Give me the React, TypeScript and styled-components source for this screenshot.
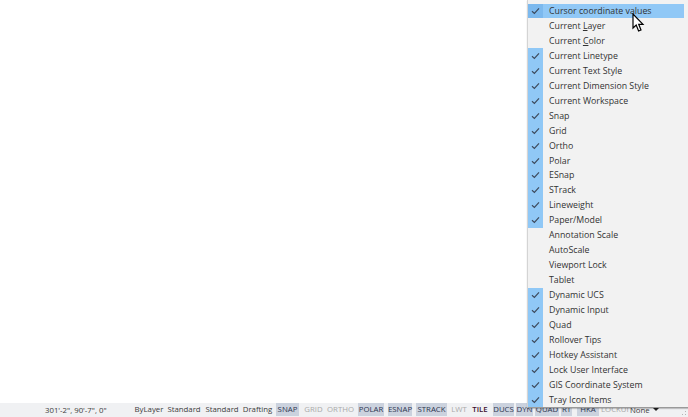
import React from "react";
import styled, { createGlobalStyle } from "styled-components";

const GlobalStyle = createGlobalStyle`
  html, body {
    margin: 0;
    padding: 0;
    background: #fff;
  }
`;

const Page = styled.div`
  position: relative;
  width: 688px;
  height: 417px;
  overflow: hidden;
  display: flex;
  flex-direction: column;
  justify-content: flex-end;
  font-family: "Open Sans", "Noto Sans", sans-serif;
`;

const StatusBar = styled.div`
  height: 14px;
  box-sizing: border-box;
  padding: 0 0 1px 45px;
  background: #f0f1f3;
  display: flex;
  align-items: center;
  font-size: 7.8px;
  color: #3c3c3c;
  white-space: nowrap;
`;

const Coords = styled.div`
  width: 89px;
`;

const Cell = styled.div<{ $on?: boolean; $off?: boolean; $w: number; $gap: number; $strong?: boolean }>`
  width: ${(p) => p.$w}px;
  margin-right: ${(p) => p.$gap}px;
  height: 13px;
  line-height: 13px;
  text-align: center;
  flex-shrink: 0;
  background: ${(p) => (p.$on ? "#cbd2de" : "transparent")};
  color: ${(p) => (p.$strong ? "#3c1030" : p.$off ? "#aaa" : p.$on ? "#2c3550" : "#3c3c3c")};
  font-weight: ${(p) => (p.$strong ? 600 : 400)};
`;

const Arrow = styled.span`
  width: 0;
  height: 0;
  margin-left: 3px;
  border-left: 3px solid transparent;
  border-right: 3px solid transparent;
  border-top: 3px solid #222;
`;

const Grip = styled.svg`
  position: absolute;
  right: 1px;
  bottom: 1px;
`;

const Menu = styled.div`
  position: absolute;
  left: 527px;
  top: 0;
  width: 161px;
  height: 408px;
  box-sizing: border-box;
  padding-top: 3.5px;
  background: #f2f2f2;
  border-left: 1px solid #d4d4d4;
  border-bottom: 1px solid #9a9a9a;
  box-shadow: 0 1px 1px rgba(0, 0, 0, 0.2);
`;

const Row = styled.div<{ $hot?: boolean }>`
  height: 14.96px;
  margin-right: 4px;
  display: flex;
  align-items: center;
  font-size: 8.8px;
  color: #333;
  background: ${(p) => (p.$hot ? "#90c8f6" : "transparent")};
  white-space: nowrap;
`;

const CheckBox = styled.div<{ $on: boolean; $hot?: boolean }>`
  width: 15px;
  height: 100%;
  margin-right: 6px;
  display: flex;
  align-items: center;
  justify-content: center;
  background: ${(p) => (p.$hot ? "#7cb9ee" : p.$on ? "#90c8f6" : "transparent")};
`;

const Cursor = styled.svg`
  position: absolute;
  left: 632px;
  top: 13px;
`;

const Check = () => (
  <svg width="9" height="8" viewBox="0 0 9 8">
    <path d="M1 4.2 L3.4 6.4 L8 1.4" fill="none" stroke="#3d4a5c" strokeWidth="1.2" />
  </svg>
);

const items: { label: React.ReactNode; on: boolean; hot?: boolean }[] = [
  { label: "Cursor coordinate values", on: true, hot: true },
  { label: <>Current <u>L</u>ayer</>, on: false },
  { label: <>Current <u>C</u>olor</>, on: false },
  { label: "Current Linetype", on: true },
  { label: "Current Text Style", on: true },
  { label: "Current Dimension Style", on: true },
  { label: "Current Workspace", on: true },
  { label: "Snap", on: true },
  { label: "Grid", on: true },
  { label: "Ortho", on: true },
  { label: "Polar", on: true },
  { label: "ESnap", on: true },
  { label: "STrack", on: true },
  { label: "Lineweight", on: true },
  { label: "Paper/Model", on: true },
  { label: "Annotation Scale", on: false },
  { label: "AutoScale", on: false },
  { label: "Viewport Lock", on: false },
  { label: "Tablet", on: false },
  { label: "Dynamic UCS", on: true },
  { label: "Dynamic Input", on: true },
  { label: "Quad", on: true },
  { label: "Rollover Tips", on: true },
  { label: "Hotkey Assistant", on: true },
  { label: "Lock User Interface", on: true },
  { label: "GIS Coordinate System", on: true },
  { label: "Tray Icon Items", on: true },
];

const cells = [
  { t: "ByLayer", w: 30, gap: 2 },
  { t: "Standard", w: 36, gap: 2 },
  { t: "Standard", w: 36, gap: 0 },
  { t: "Drafting", w: 35, gap: 1 },
  { t: "SNAP", w: 23, gap: 3, on: true },
  { t: "GRID", w: 23, gap: 1, off: true },
  { t: "ORTHO", w: 29, gap: 3, off: true },
  { t: "POLAR", w: 26, gap: 4, on: true },
  { t: "ESNAP", w: 24, gap: 4, on: true },
  { t: "STRACK", w: 31, gap: 2, on: true },
  { t: "LWT", w: 20, gap: 1, off: true },
  { t: "TILE", w: 20, gap: 3, strong: true },
  { t: "DUCS", w: 21, gap: 2, on: true },
  { t: "DYN", w: 17, gap: 2, on: true },
  { t: "QUAD", w: 24, gap: 2, on: true },
  { t: "RT", w: 11, gap: 5, on: true },
  { t: "HKA", w: 22, gap: 2, on: true },
  { t: "LOCKUI", w: 27, gap: 2, off: true },
];

export default function App() {
  return (
    <Page>
      <GlobalStyle />
      <StatusBar>
        <Coords>301'-2", 90'-7", 0"</Coords>
        {cells.map((c) => (
          <Cell key={c.t + c.w} $w={c.w} $gap={c.gap} $on={c.on} $off={c.off} $strong={c.strong}>
            {c.t}
          </Cell>
        ))}
        None
        <Arrow />
      </StatusBar>
      <Grip width="5" height="5" viewBox="0 0 5 5">
        <path d="M3 0h1v1H3zM0 3h1v1H0zM3 3h1v1H3z" fill="#b5b5b5" />
      </Grip>
      <Menu>
        {items.map((it, i) => (
          <Row key={i} $hot={it.hot}>
            <CheckBox $on={it.on} $hot={it.hot}>{it.on && <Check />}</CheckBox>
            <span>{it.label}</span>
          </Row>
        ))}
      </Menu>
      <Cursor width="13" height="20" viewBox="0 0 13 20">
        <path
          d="M1 1 V15 L4.2 12 L6.6 18 L9 17 L6.7 11.3 H11 Z"
          fill="#fff"
          stroke="#000"
          strokeWidth="1.2"
        />
      </Cursor>
    </Page>
  );
}
